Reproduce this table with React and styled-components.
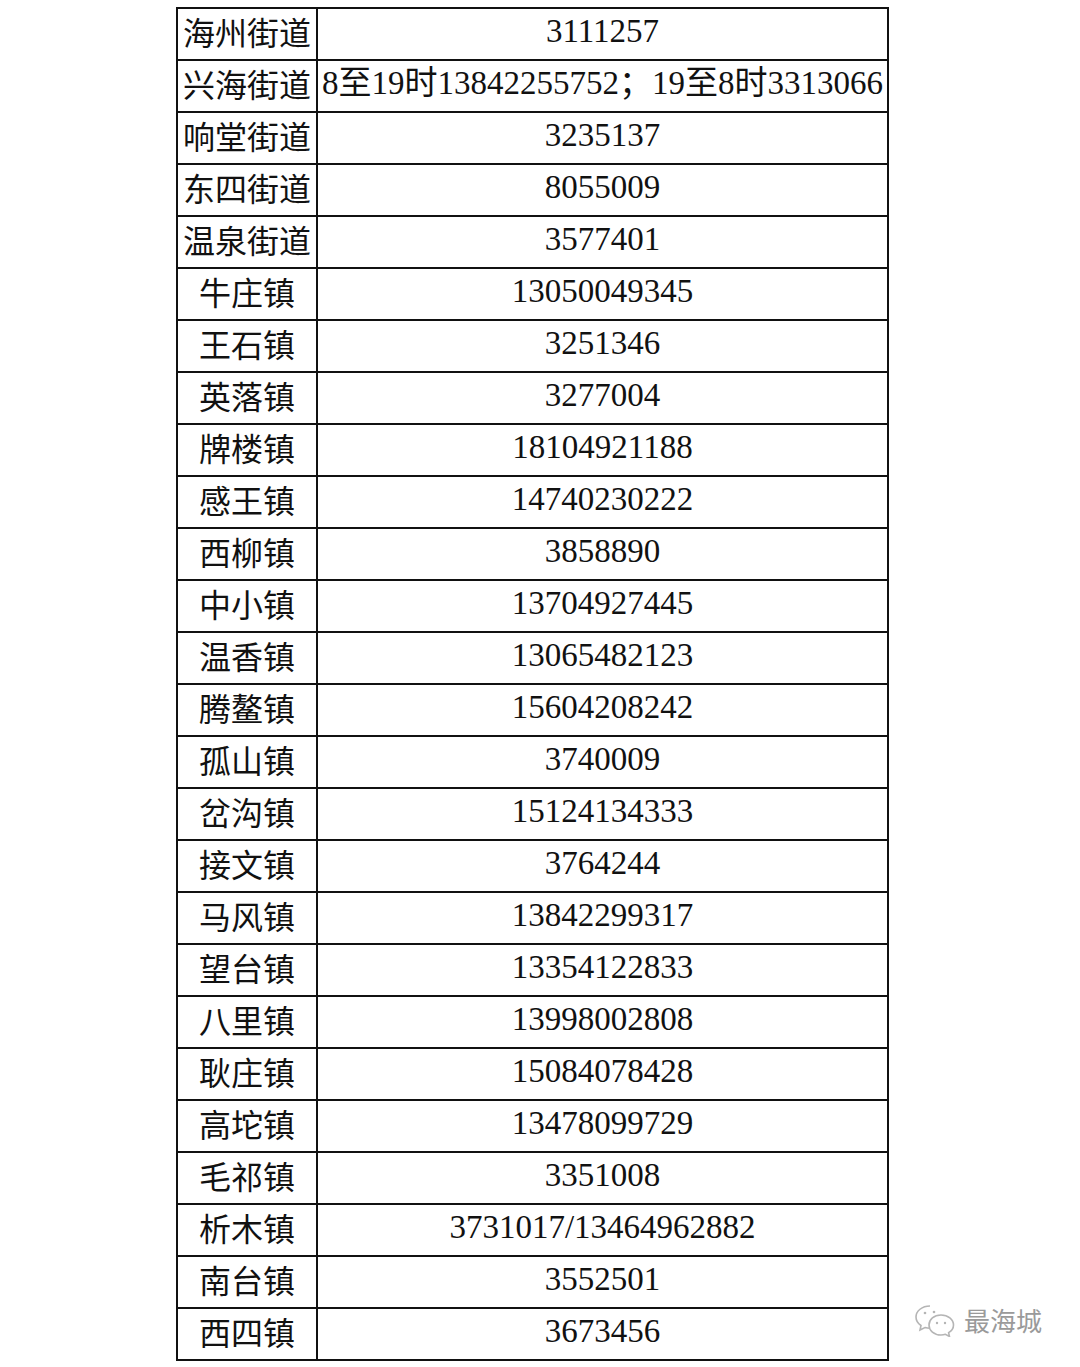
import React from "react";
import styled, { createGlobalStyle } from "styled-components";

const Global = createGlobalStyle`
  html, body { margin: 0; padding: 0; background: #fff; }
  body { width: 1080px; height: 1367px; overflow: hidden; }
`;

const Page = styled.div`
  position: relative;
  width: 1080px;
  height: 1367px;
  background: #fff;
  padding: 7px 0 0 176px;
  box-sizing: border-box;
`;

const Table = styled.table`
  border-collapse: collapse;
  width: 713px;
  table-layout: fixed;
`;

const Row = styled.tr`
  height: 52px;
`;

const NameCell = styled.td`
  border: 2px solid #111;
  padding: 0 0 6px 0;
  text-align: center;
  vertical-align: middle;
  font-family: "Noto Sans CJK SC", "Noto Sans", sans-serif;
  font-size: 32px;
  line-height: 42px;
  color: #111;
  white-space: nowrap;
  overflow: hidden;
`;

const NumCell = styled.td`
  border: 2px solid #111;
  padding: 0 0 6px 0;
  text-align: center;
  vertical-align: middle;
  font-family: "Liberation Serif", "Noto Sans CJK SC", serif;
  font-size: 33px;
  line-height: 42px;
  color: #111;
  white-space: nowrap;
  overflow: hidden;
`;

const Watermark = styled.div`
  position: absolute;
  left: 914px;
  top: 1301px;
  display: flex;
  align-items: center;
  gap: 8px;
  color: #9a9a9a;
  font-family: "Noto Sans CJK SC", sans-serif;
  font-size: 26px;
`;

const rows = [
  ["海州街道", "3111257"],
  ["兴海街道", "8至19时13842255752；19至8时3313066"],
  ["响堂街道", "3235137"],
  ["东四街道", "8055009"],
  ["温泉街道", "3577401"],
  ["牛庄镇", "13050049345"],
  ["王石镇", "3251346"],
  ["英落镇", "3277004"],
  ["牌楼镇", "18104921188"],
  ["感王镇", "14740230222"],
  ["西柳镇", "3858890"],
  ["中小镇", "13704927445"],
  ["温香镇", "13065482123"],
  ["腾鳌镇", "15604208242"],
  ["孤山镇", "3740009"],
  ["岔沟镇", "15124134333"],
  ["接文镇", "3764244"],
  ["马风镇", "13842299317"],
  ["望台镇", "13354122833"],
  ["八里镇", "13998002808"],
  ["耿庄镇", "15084078428"],
  ["高坨镇", "13478099729"],
  ["毛祁镇", "3351008"],
  ["析木镇", "3731017/13464962882"],
  ["南台镇", "3552501"],
  ["西四镇", "3673456"],
];

const WeChatIcon = () => (
  <svg width="42" height="34" viewBox="0 0 42 34" fill="none" stroke="#b5b5b5" strokeWidth="1.6">
    <path d="M16 3 C8 3 2 8 2 14 C2 17.5 4 20.5 7 22.5 L6 27 L11 24.5 C12.6 25 14.2 25.2 16 25.2" />
    <path d="M27 12 C20 12 15 16.5 15 22 C15 27.5 20 32 27 32 C28.6 32 30 31.8 31.4 31.3 L35.5 33.5 L34.6 29.6 C37.8 27.8 39.5 25 39.5 22 C39.5 16.5 34 12 27 12 Z" />
    <circle cx="11" cy="10" r="1.3" fill="#b5b5b5" stroke="none" />
    <circle cx="20" cy="9" r="1.3" fill="#b5b5b5" stroke="none" />
    <circle cx="23" cy="20" r="1.2" fill="#b5b5b5" stroke="none" />
    <circle cx="31" cy="20" r="1.2" fill="#b5b5b5" stroke="none" />
  </svg>
);

export default function App() {
  return (
    <>
      <Global />
      <Page>
        <Table>
          <colgroup>
            <col style={{ width: 140 }} />
            <col />
          </colgroup>
          <tbody>
            {rows.map(([n, v]) => (
              <Row key={n}>
                <NameCell>{n}</NameCell>
                <NumCell>{v}</NumCell>
              </Row>
            ))}
          </tbody>
        </Table>
        <Watermark>
          <WeChatIcon />
          <span>最海城</span>
        </Watermark>
      </Page>
    </>
  );
}
